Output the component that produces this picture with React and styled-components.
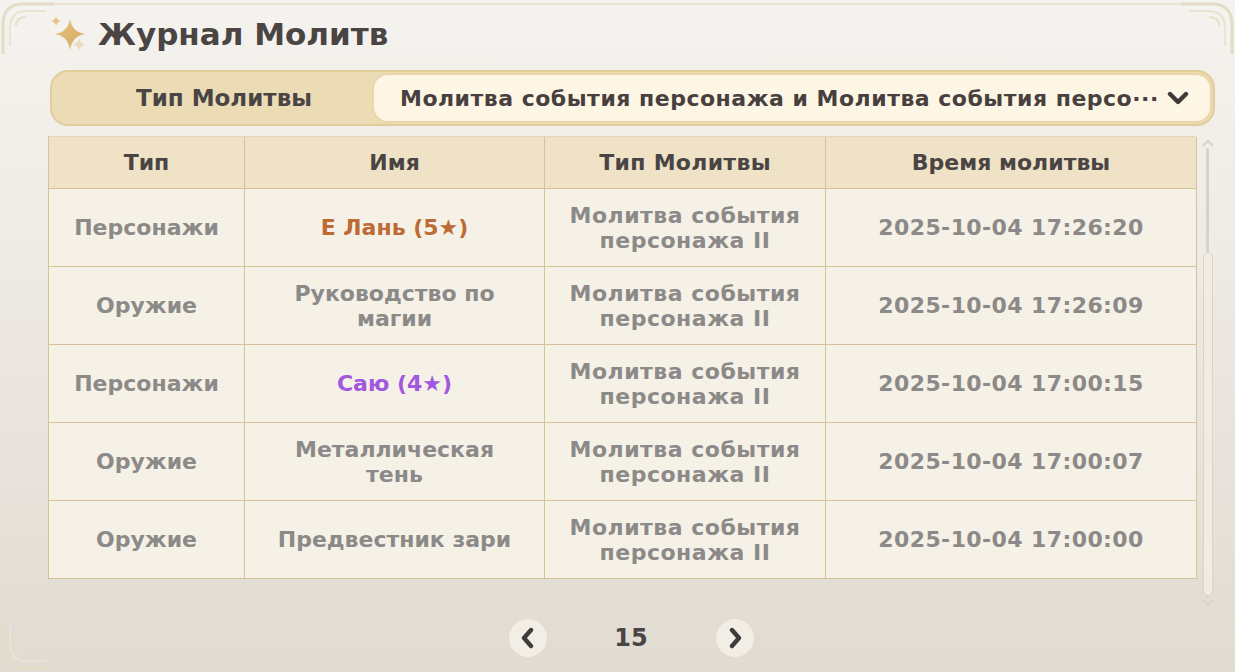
import React from "react";
import styled, { createGlobalStyle } from "styled-components";

const GlobalStyle = createGlobalStyle`
  html, body { margin: 0; padding: 0; }
  body { font-family: "DejaVu Sans", "Noto Sans", sans-serif; }
`;

const Page = styled.div`
  position: relative;
  width: 1235px;
  height: 672px;
  overflow: hidden;
  box-sizing: border-box;
  padding: 14px 0 0 48px;
  background: linear-gradient(180deg, #f5f3ef 0%, #efebe5 35%, #e6e1d9 75%, #e1dbd2 100%);
  font-family: "DejaVu Sans", "Noto Sans", sans-serif;
`;

const TopEdge = styled.div`
  position: absolute;
  left: 44px;
  right: 44px;
  top: 3px;
  height: 2px;
  background: #ece5d6;
`;

const Corner = styled.svg`
  position: absolute;
  width: 56px;
  height: 56px;
  ${(p) => p.$pos === "tl" && "left: 0; top: 0;"}
  ${(p) => p.$pos === "tr" && "right: 0; top: 0; transform: scaleX(-1);"}
  ${(p) => p.$pos === "bl" && "left: 0; bottom: 0; transform: scaleY(-1);"}
`;

const TitleRow = styled.div`
  display: flex;
  align-items: center;
  gap: 6px;
  height: 40px;
`;

const Title = styled.h1`
  margin: 0;
  font-size: 31px;
  font-weight: 700;
  color: #4a4443;
`;

const TabBar = styled.div`
  margin-top: 16px;
  margin-left: 2px;
  width: 1165px;
  height: 56px;
  box-sizing: border-box;
  display: flex;
  align-items: stretch;
  background: #ecdcb5;
  border: 2px solid #e2cc9c;
  border-radius: 18px;
`;

const TabLabel = styled.div`
  width: 320px;
  box-sizing: border-box;
  padding-left: 24px;
  display: flex;
  align-items: center;
  justify-content: center;
  font-size: 23px;
  font-weight: 700;
  color: #4a4545;
`;

const TabValue = styled.div`
  flex: 1;
  display: flex;
  align-items: center;
  margin: 1px 1px 1px 0;
  padding: 0 18px 0 26px;
  background: #fdf6e4;
  border: 2px solid #ead6a8;
  border-radius: 16px;
  font-size: 22px;
  font-weight: 700;
  color: #48403e;
  gap: 8px;
`;

const TabText = styled.span`
  white-space: nowrap;
  overflow: hidden;
  letter-spacing: 0.5px;
`;

const TableArea = styled.div`
  margin-top: 10px;
  display: flex;
  align-items: flex-start;
  gap: 5px;
`;

const Grid = styled.div`
  display: grid;
  grid-template-columns: 196px 300px 281px 371px;
  grid-template-rows: 52px repeat(5, 78px);
  border-top: 1px solid #e6d6b6;
  border-left: 1px solid #d8c29a;
  box-sizing: border-box;
  width: 1148px;
`;

const Cell = styled.div`
  display: flex;
  align-items: center;
  justify-content: center;
  text-align: center;
  box-sizing: border-box;
  border-right: 1px solid #d8c29a;
  border-bottom: 1px solid #d8c29a;
  padding: 0 20px;
  font-size: 22px;
  font-weight: 700;
  line-height: 25px;
  letter-spacing: ${(p) => (p.$ls ? p.$ls : "0")};
  background: ${(p) => (p.$head ? "#efe2c6" : "#f6f1e6")};
  color: ${(p) =>
    p.$head ? "#4a4545" : p.$rank === 5 ? "#bd6a34" : p.$rank === 4 ? "#a257df" : "#8b8a89"};
`;

const Scroll = styled.div`
  position: relative;
  width: 14px;
  height: 470px;
  margin-top: 2px;
`;

const Track = styled.div`
  position: absolute;
  left: 5px;
  top: 10px;
  width: 3px;
  height: 450px;
  background: #d9d2c6;
  border-radius: 2px;
`;

const Thumb = styled.div`
  position: absolute;
  left: 2px;
  top: 114px;
  width: 8px;
  height: 342px;
  background: #f1ece3;
  border: 1px solid #ddd4c4;
  border-radius: 5px;
`;

const ArrowIcon = styled.svg`
  position: absolute;
  left: 0;
  ${(p) => (p.$down ? "bottom: 0;" : "top: 0;")}
`;

const Pager = styled.div`
  display: flex;
  align-items: center;
  justify-content: center;
  width: 1148px;
  box-sizing: border-box;
  padding-left: 18px;
  margin-top: 10px;
`;

const PageButton = styled.div`
  width: 40px;
  height: 40px;
  border-radius: 50%;
  background: #f3eee5;
  border: 1px solid #e4dacb;
  box-sizing: border-box;
  display: flex;
  align-items: center;
  justify-content: center;
`;

const PageNum = styled.div`
  width: 167px;
  text-align: center;
  font-size: 24px;
  font-weight: 700;
  color: #4a4545;
`;

const Sparkle = () => (
  <svg width="44" height="40" viewBox="0 0 44 40">
    <defs>
      <linearGradient id="sg" x1="0" y1="0" x2="1" y2="1">
        <stop offset="0" stopColor="#e6c27d" />
        <stop offset="1" stopColor="#d4a963" />
      </linearGradient>
    </defs>
    <path d="M22 5 Q24 18 37 20 Q24 22 22 36 Q20 22 7 20 Q20 18 22 5Z" fill="url(#sg)" />
    <path d="M8 2 Q8.8 6.2 13 7 Q8.8 7.8 8 12 Q7.2 7.8 3 7 Q7.2 6.2 8 2Z" fill="#e3c48a" />
    <path d="M31 24 Q32 29.5 37 30.5 Q32 31.5 31 37 Q30 31.5 25 30.5 Q30 29.5 31 24Z" fill="#ebdcc0" />
  </svg>
);

const CornerArt = ({ pos }) => (
  <Corner $pos={pos} viewBox="0 0 56 56" fill="none">
    <path d="M3 54 L3 24 Q3 5 22 4 L54 4" stroke="#e4dcc8" strokeWidth="3" />
    <path d="M10 46 L10 28 Q10 11 27 11 L46 11" stroke="#ebe3d2" strokeWidth="2" />
    <path d="M16 26 Q16 17 26 17" stroke="#e8dfcb" strokeWidth="2" />
  </Corner>
);

const Chevron = ({ dir }) => {
  const d =
    dir === "down" ? "M3 4 L11 12 L19 4" : dir === "left" ? "M13 3 L6 11 L13 19" : "M7 3 L14 11 L7 19";
  const w = dir === "down" ? 22 : 20;
  const h = dir === "down" ? 16 : 22;
  return (
    <svg width={w} height={h} viewBox={`0 0 ${w} ${h}`}>
      <path d={d} stroke="#3f3b3b" strokeWidth="4.4" fill="none" strokeLinecap="round" strokeLinejoin="round" />
    </svg>
  );
};

const rows = [
  { type: "Персонажи", name: "Е Лань (5★)", rank: 5, time: "2025-10-04 17:26:20" },
  { type: "Оружие", name: "Руководство по магии", time: "2025-10-04 17:26:09" },
  { type: "Персонажи", name: "Саю (4★)", rank: 4, time: "2025-10-04 17:00:15" },
  { type: "Оружие", name: "Металлическая тень", time: "2025-10-04 17:00:07" },
  { type: "Оружие", name: "Предвестник зари", time: "2025-10-04 17:00:00" },
];

export default function App() {
  return (
    <>
      <GlobalStyle />
      <Page>
        <TopEdge />
        <CornerArt pos="tl" />
        <CornerArt pos="tr" />
        <CornerArt pos="bl" />
        <TitleRow>
          <Sparkle />
          <Title>Журнал Молитв</Title>
        </TitleRow>
        <TabBar>
          <TabLabel>Тип Молитвы</TabLabel>
          <TabValue>
            <TabText>Молитва события персонажа и Молитва события персо···</TabText>
            <Chevron dir="down" />
          </TabValue>
        </TabBar>
        <TableArea>
          <Grid>
            <Cell $head>Тип</Cell>
            <Cell $head>Имя</Cell>
            <Cell $head $ls="0.3px">Тип Молитвы</Cell>
            <Cell $head>Время молитвы</Cell>
            {rows.map((r, i) => (
              <React.Fragment key={i}>
                <Cell>{r.type}</Cell>
                <Cell $rank={r.rank}>{r.name}</Cell>
                <Cell $ls="0.5px">
                  Молитва события
                  <br />
                  персонажа II
                </Cell>
                <Cell $ls="0.4px">{r.time}</Cell>
              </React.Fragment>
            ))}
          </Grid>
          <Scroll>
            <ArrowIcon width="14" height="10" viewBox="0 0 14 10">
              <path d="M2 8 L7 3 L12 8" stroke="#dcd4c6" strokeWidth="2" fill="none" />
            </ArrowIcon>
            <Track />
            <Thumb />
            <ArrowIcon $down width="14" height="10" viewBox="0 0 14 10">
              <path d="M2 2 L7 7 L12 2" stroke="#dcd4c6" strokeWidth="2" fill="none" />
            </ArrowIcon>
          </Scroll>
        </TableArea>
        <Pager>
          <PageButton>
            <Chevron dir="left" />
          </PageButton>
          <PageNum>15</PageNum>
          <PageButton>
            <Chevron dir="right" />
          </PageButton>
        </Pager>
      </Page>
    </>
  );
}
